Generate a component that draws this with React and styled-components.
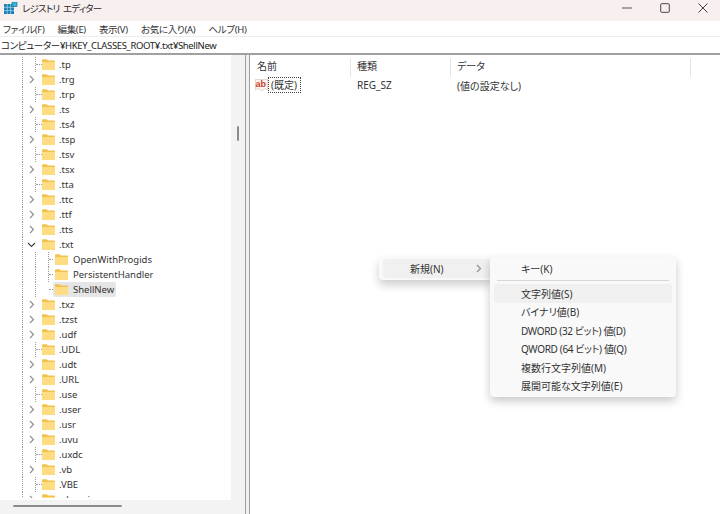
import styled, { createGlobalStyle } from 'styled-components'

const GlobalStyle = createGlobalStyle`
html, body { margin:0; padding:0; background:#fff; }
body { font-family:"Noto Sans","Noto Sans CJK JP",sans-serif; color:#1f1f1f; font-size:10px; font-feature-settings:"palt"; }
`
const Window = styled.div`
width:720px;
height:514px;
display:flex;
flex-direction:column;
overflow:hidden;
position:relative;
`
const TitleBar = styled.div`
height:21px;
background:#f7f0ee;
display:flex;
align-items:center;
padding:0 0 5px 4px;
gap:4px;
flex:none;
box-sizing:border-box;
`
const Title = styled.div`
font-size:9.5px;
letter-spacing:-.8px;
word-spacing:2px;
flex:1;
color:#2a2a2a;
`
const WinButtons = styled.div`
display:flex;
margin-right:-2px;
`
const WinButton = styled.div`
width:38px;
height:16px;
display:flex;
align-items:center;
justify-content:center;
`
const MenuBar = styled.div`
height:16px;
display:flex;
align-items:center;
padding-left:3px;
box-sizing:border-box;
gap:13px;
flex:none;
border-bottom:1px solid #ededed;
`
const MenuLabel = styled.span`
font-size:9.5px;
letter-spacing:-.3px;
color:#333;
`
const AddressBar = styled.div`
height:18px;
line-height:15px;
padding:1px 0 0 1px;
font-size:9.5px;
letter-spacing:-.35px;
flex:none;
color:#222;
box-sizing:border-box;
border-bottom:2px solid #a0a0a0;
`
const Panes = styled.div`
flex:1;
display:flex;
min-height:0;
`
const TreePane = styled.div`
width:245px;
flex:none;
display:grid;
grid-template-columns:231px 14px;
grid-template-rows:1fr 14px;
min-height:0;
`
const TreeList = styled.div`
overflow:hidden;
padding-top:2px;
margin-bottom:2px;
`
const Row = styled.div`
height:15px;
display:flex;
align-items:stretch;
`
const Guide = styled.span`
flex:none;
width:${(props) => props.$width}px;
border-right:${(props) => props.$line ? "1px dotted #9a9a9a" : "none"};
box-sizing:border-box;
`
const Twisty = styled.span`
flex:none;
width:19px;
display:flex;
align-items:center;
justify-content:center;
padding-right:2px;
box-sizing:border-box;
`
const Branch = styled.span`
flex:none;
width:${(props) => props.$width}px;
height:8px;
border-bottom:1px dotted #9a9a9a;
box-sizing:border-box;
`
const Node = styled.span`
display:flex;
align-items:center;
gap:${(props) => props.$child ? "5px" : "4px"};
padding:0 2px 0 ${(props) => props.$child ? "2px" : "0"};
background:${(props) => props.$selected ? "#e5e5e5" : "transparent"};
border-radius:2px;
font-size:9.5px;
color:#333;
white-space:nowrap;
`
const VScroll = styled.div`
background:#f3f3f3;
padding-top:71px;
display:flex;
justify-content:center;
align-items:flex-start;
`
const VThumb = styled.div`
width:2px;
height:15px;
background:#8c8c8c;
border-radius:1px;
`
const HScroll = styled.div`
grid-column:1 / span 2;
background:#f3f3f3;
padding:5px 0 0 13px;
`
const HThumb = styled.div`
width:109px;
height:2px;
background:#8c8c8c;
border-radius:1px;
`
const Splitter = styled.div`
width:5px;
flex:none;
background:#f0f0f0;
border-left:1px solid #a0a0a0;
border-right:1px solid #a0a0a0;
box-sizing:border-box;
`
const ListPane = styled.div`
flex:1;
min-width:0;
`
const ListHead = styled.div`
height:22px;
display:flex;
align-items:flex-start;
padding-top:3px;
box-sizing:border-box;
`
const HeadCell = styled.div`
width:${(props) => props.$width}px;
height:19px;
line-height:17px;
padding-left:${(props) => props.$pad}px;
box-sizing:border-box;
border-right:1px solid #e5e5e5;
font-size:10px;
color:#333;
flex:none;
`
const ListRow = styled.div`
height:16px;
display:flex;
align-items:center;
font-size:10px;
color:#333;
`
const NameCell = styled.div`
width:101px;
flex:none;
display:flex;
align-items:center;
padding-left:5px;
box-sizing:border-box;
`
const Focused = styled.span`
border:1px dotted #444;
padding:0 3px 0 2px;
line-height:14px;
`
const DataCell = styled.div`
width:${(props) => props.$width}px;
flex:none;
padding-left:6px;
box-sizing:border-box;
`
const ParentMenu = styled.div`
position:absolute;
left:379px;
top:257px;
width:113px;
height:23px;
background:#f9f9f9;
border-radius:4px 0 0 4px;
box-shadow:0 5px 10px rgba(0,0,0,.2);
padding:2px 0 2px 4px;
box-sizing:border-box;
`
const ParentItem = styled.div`
height:19px;
background:#f0f0f0;
border-radius:3px;
display:flex;
align-items:center;
justify-content:space-between;
padding:0 9px 0 27px;
font-size:10px;
color:#333;
`
const SubMenu = styled.div`
position:absolute;
left:490px;
top:257px;
width:186px;
height:140px;
background:#f9f9f9;
border-radius:4px;
box-shadow:0 4px 10px rgba(0,0,0,.22);
padding:2px 4px;
box-sizing:border-box;
display:flex;
flex-direction:column;
`
const SubItem = styled.div`
height:18.4px;
flex:none;
display:flex;
align-items:center;
padding-left:27px;
font-size:10px;
letter-spacing:${(props) => props.$tight ? "-.35px" : "0"};
color:#333;
border-radius:3px;
background:${(props) => props.$hover ? "#f0f0f0" : "transparent"};
`
const Separator = styled.div`
height:1px;
margin:3px 3px;
background:#d8d8d8;
flex:none;
`

const Folder = () => (
  <svg width="13" height="11" viewBox="0 0 13 11">
    <path d="M0 1.2 Q0 .2 1 .2 H4.6 L6 1.6 H12 Q13 1.6 13 2.6 V10 Q13 11 12 11 H1 Q0 11 0 10 Z" fill="#f2c24c" />
    <path d="M0 3 H13 V10 Q13 11 12 11 H1 Q0 11 0 10 Z" fill="#fddc82" />
  </svg>
)

const Chevron = ({ open }) => (
  <svg width="9" height="9" viewBox="0 0 9 9" fill="none" stroke={open ? "#404040" : "#8c8c8c"} strokeWidth="1.1">
    <path d={open ? "M1 3 L4.5 6.5 L8 3" : "M3 1 L6.5 4.5 L3 8"} />
  </svg>
)

const AppIcon = () => (
  <svg width="14" height="13" viewBox="0 0 14 13">
    <rect x="0" y="2" width="10" height="10" fill="#1f7fb5" />
    <path d="M3.3 2V12M6.6 2V12M0 5.3H10M0 8.6H10" stroke="#a9dcef" strokeWidth=".7" />
    <rect x="8" y="0" width="5" height="4.5" fill="#35b5d8" stroke="#12628f" strokeWidth=".6" />
  </svg>
)

const ValueIcon = () => (
  <svg width="13" height="13" viewBox="0 0 13 13">
    <path d="M0.5 0.5H12.5V11L10 9.5L7 12L4 9.5L0.5 11Z" fill="#fdf3ee" stroke="#d8c8c0" strokeWidth=".7" />
    <text x="0.4" y="7.8" fontSize="9" fontWeight="700" fill="#c8452f" fontFamily="Liberation Sans, sans-serif">ab</text>
  </svg>
)

const menus = ["ファイル(F)", "編集(E)", "表示(V)", "お気に入り(A)", "ヘルプ(H)"]

const rows = [
  { name: ".tp" }, { name: ".trg", more: true }, { name: ".trp" }, { name: ".ts", more: true },
  { name: ".ts4" }, { name: ".tsp", more: true }, { name: ".tsv" }, { name: ".tsx", more: true },
  { name: ".tta" }, { name: ".ttc", more: true }, { name: ".ttf", more: true }, { name: ".tts", more: true },
  { name: ".txt", open: true },
  { name: "OpenWithProgids", child: true }, { name: "PersistentHandler", child: true },
  { name: "ShellNew", child: true, selected: true, last: true },
  { name: ".txz", more: true }, { name: ".tzst", more: true }, { name: ".udf", more: true },
  { name: ".UDL" }, { name: ".udt", more: true }, { name: ".URL", more: true }, { name: ".use" },
  { name: ".user", more: true }, { name: ".usr", more: true }, { name: ".uvu", more: true },
  { name: ".uxdc" }, { name: ".vb", more: true }, { name: ".VBE" }, { name: ".vbproj", more: true },
]

function TreeRow({ row }) {
  if (row.child) {
    return (
      <Row>
        <Guide $width={23} $line />
        <Guide $width={13} $line />
        <Guide $width={13} $line={!row.last} />
        <Branch $width={4} />
        <Node $child $selected={row.selected}><Folder />{row.name}</Node>
      </Row>
    )
  }
  return (
    <Row>
      <Guide $width={23} $line />
      {row.more || row.open
        ? <Twisty><Chevron open={row.open} /></Twisty>
        : <><Guide $width={13} $line /><Branch $width={6} /></>}
      <Node><Folder />{row.name}</Node>
    </Row>
  )
}

export default function App() {
  return (
    <Window>
      <GlobalStyle />
      <TitleBar>
        <AppIcon />
        <Title>レジストリ エディター</Title>
        <WinButtons>
          <WinButton>
            <svg width="10" height="10" viewBox="0 0 10 10"><path d="M0 5H10" stroke="#555" /></svg>
          </WinButton>
          <WinButton>
            <svg width="10" height="10" viewBox="0 0 10 10"><rect x=".7" y=".7" width="8.6" height="8.6" rx="1" fill="none" stroke="#444" /></svg>
          </WinButton>
          <WinButton>
            <svg width="10" height="10" viewBox="0 0 10 10"><path d="M.5 .5L9.5 9.5M9.5 .5L.5 9.5" stroke="#444" /></svg>
          </WinButton>
        </WinButtons>
      </TitleBar>
      <MenuBar>
        {menus.map((m) => <MenuLabel key={m}>{m}</MenuLabel>)}
      </MenuBar>
      <AddressBar>コンピューター¥HKEY_CLASSES_ROOT¥.txt¥ShellNew</AddressBar>
      <Panes>
        <TreePane>
          <TreeList>
            {rows.map((r) => <TreeRow key={r.name} row={r} />)}
          </TreeList>
          <VScroll><VThumb /></VScroll>
          <HScroll><HThumb /></HScroll>
        </TreePane>
        <Splitter />
        <ListPane>
          <ListHead>
            <HeadCell $width={101} $pad={7}>名前</HeadCell>
            <HeadCell $width={100} $pad={6}>種類</HeadCell>
            <HeadCell $width={240} $pad={6}>データ</HeadCell>
          </ListHead>
          <ListRow>
            <NameCell><ValueIcon /><Focused>(既定)</Focused></NameCell>
            <DataCell $width={100}>REG_SZ</DataCell>
            <DataCell $width={200}>(値の設定なし)</DataCell>
          </ListRow>
        </ListPane>
      </Panes>
      <ParentMenu>
        <ParentItem>新規(N)<Chevron /></ParentItem>
      </ParentMenu>
      <SubMenu>
        <SubItem>キー(K)</SubItem>
        <Separator />
        <SubItem $hover>文字列値(S)</SubItem>
        <SubItem>バイナリ値(B)</SubItem>
        <SubItem $tight>DWORD (32 ビット) 値(D)</SubItem>
        <SubItem $tight>QWORD (64 ビット) 値(Q)</SubItem>
        <SubItem>複数行文字列値(M)</SubItem>
        <SubItem>展開可能な文字列値(E)</SubItem>
      </SubMenu>
    </Window>
  )
}
